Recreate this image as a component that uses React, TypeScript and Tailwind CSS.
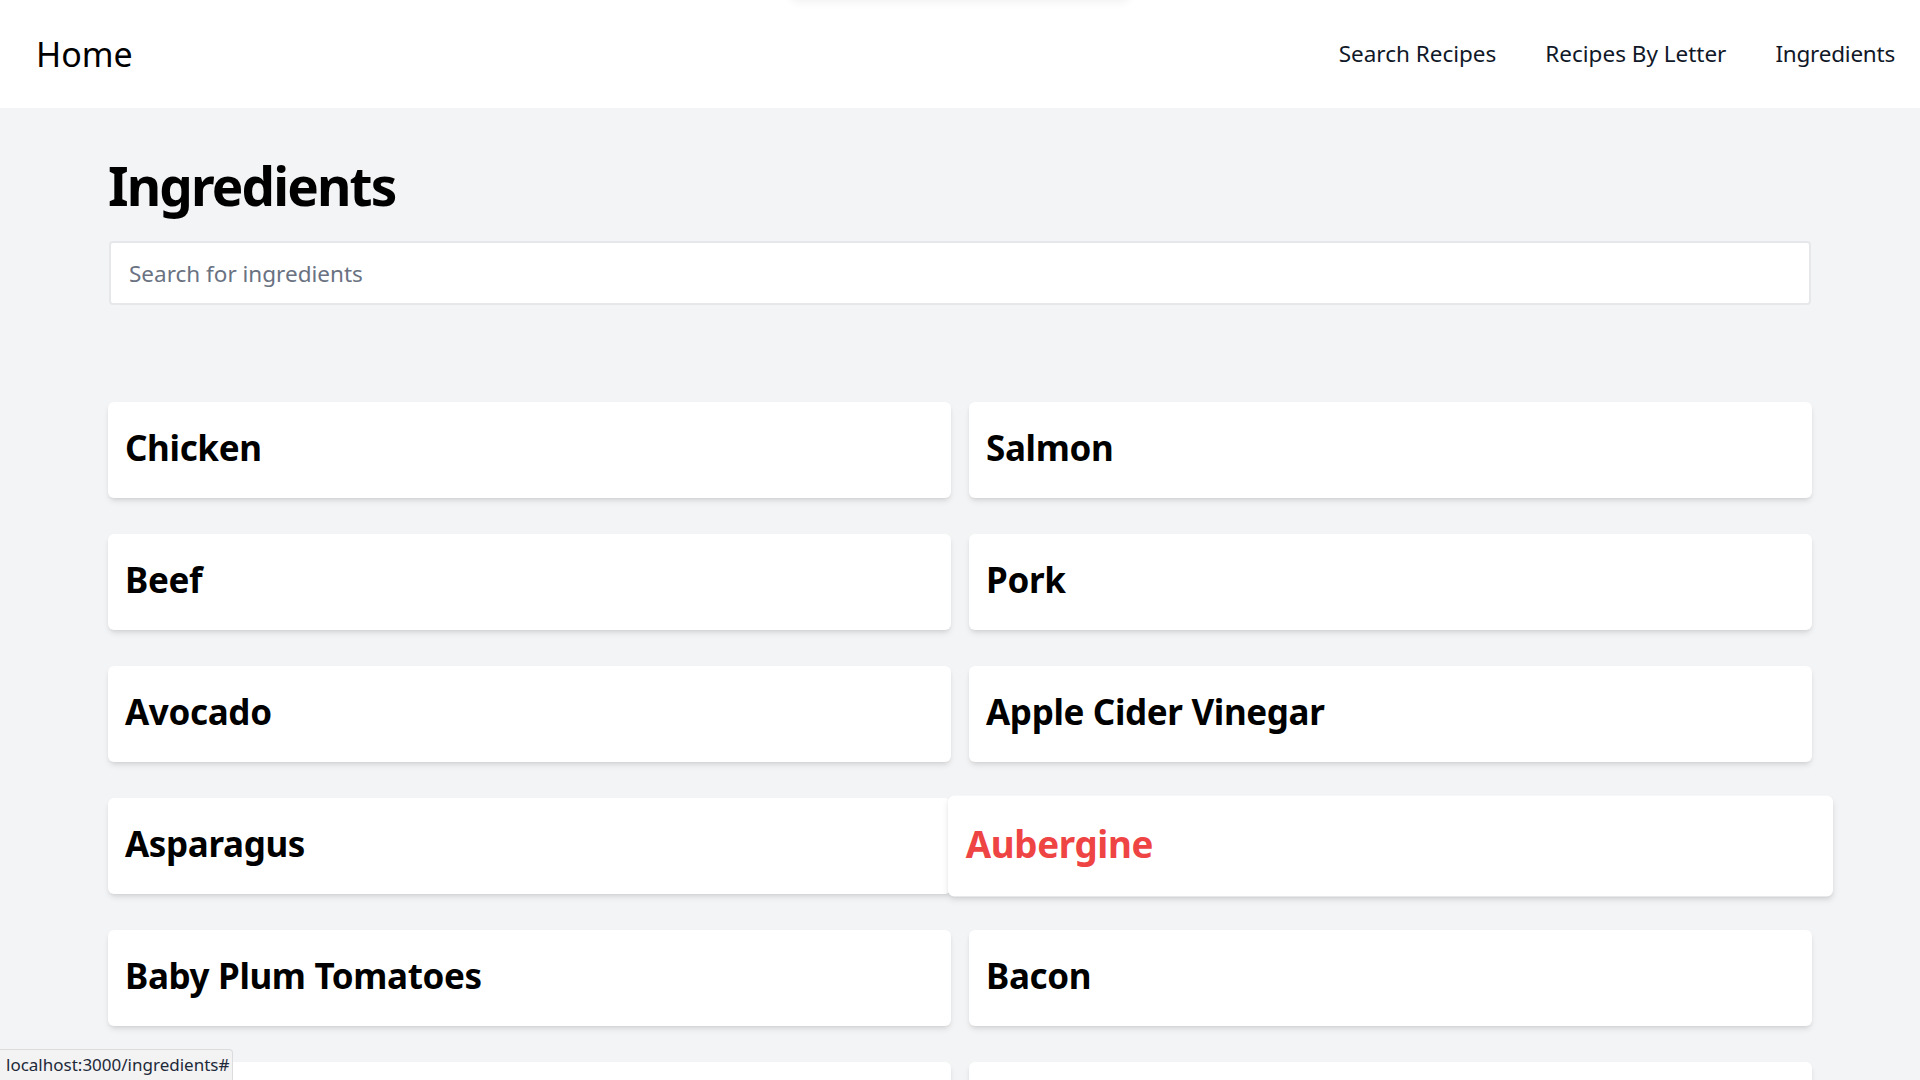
// App.tsx
import type { FC } from 'react';

const ingredients = [
  'Chicken',
  'Salmon',
  'Beef',
  'Pork',
  'Avocado',
  'Apple Cider Vinegar',
  'Asparagus',
  'Aubergine',
  'Baby Plum Tomatoes',
  'Bacon',
  'Baking Powder',
  'Balsamic Vinegar',
];

// the card under the pointer in the screenshot
const hovered = 'Aubergine';

const NavBar: FC = () => {
  return (
    <nav className="relative bg-white h-[108px] w-full flex items-center justify-between pl-[36px] pr-[25px]">
      <div className="absolute left-[790px] top-[-40px] w-[340px] h-[40px] rounded-lg bg-white shadow-[0_2px_10px_rgba(0,0,0,0.06)]" />
      <a href="#" className="text-[34px] text-black leading-none">
        Home
      </a>
      <div className="flex items-center gap-x-[49px]">
        <a href="#" className="text-[22.5px] text-gray-900">
          Search Recipes
        </a>
        <a href="#" className="text-[22.5px] text-gray-900">
          Recipes By Letter
        </a>
        <a href="#" className="text-[22.5px] text-gray-900 tracking-[-0.01em]">
          Ingredients
        </a>
      </div>
    </nav>
  );
};

const IngredientCard: FC<{ name: string }> = ({ name }) => {
  const isHover = name === hovered;
  return (
    <a
      href="#"
      className={
        isHover
          ? 'relative z-10 h-24 bg-white rounded-md shadow-md flex items-center pl-[17px] pb-[3px] scale-105 transition-transform'
          : 'h-24 bg-white rounded-md shadow-md flex items-center pl-[17px] pb-[3px] transition-transform hover:scale-105'
      }
    >
      <h2
        className={
          isHover
            ? 'text-[35px] font-bold tracking-[-0.01em] text-[#ef4444]'
            : 'text-[35px] font-bold tracking-[-0.01em] text-black'
        }
      >
        {name}
      </h2>
    </a>
  );
};

function App() {
  return (
    <div className="min-h-screen bg-gray-100 flex flex-col font-['Noto_Sans','Open_Sans',sans-serif] overflow-hidden">
      <NavBar />

      <main className="flex-1 px-[108px] pt-[51px]">
        <h1 className="text-[53px] font-bold text-black leading-none tracking-[-0.035em]">Ingredients</h1>
        <input
          type="text"
          placeholder="Search for ingredients"
          className="mt-[29px] mx-px w-[1702px] h-16 bg-white border-2 border-gray-200 rounded px-[18px] text-[22.5px] text-gray-900 placeholder:text-gray-500 outline-none"
        />

        <div className="mt-[97px] grid grid-cols-2 gap-x-[18px] gap-y-9 pb-10">
          {ingredients.map((name) => (
            <IngredientCard key={name} name={name} />
          ))}
        </div>
      </main>

      <div className="fixed left-0 bottom-0 h-[31px] w-[233px] bg-[#f3f3f3] border border-[#dcdcdc] border-l-0 border-b-0 rounded-tr flex items-center px-[6px] text-[17px] text-gray-800">
        localhost:3000/ingredients#
      </div>
    </div>
  );
}

export default App;
